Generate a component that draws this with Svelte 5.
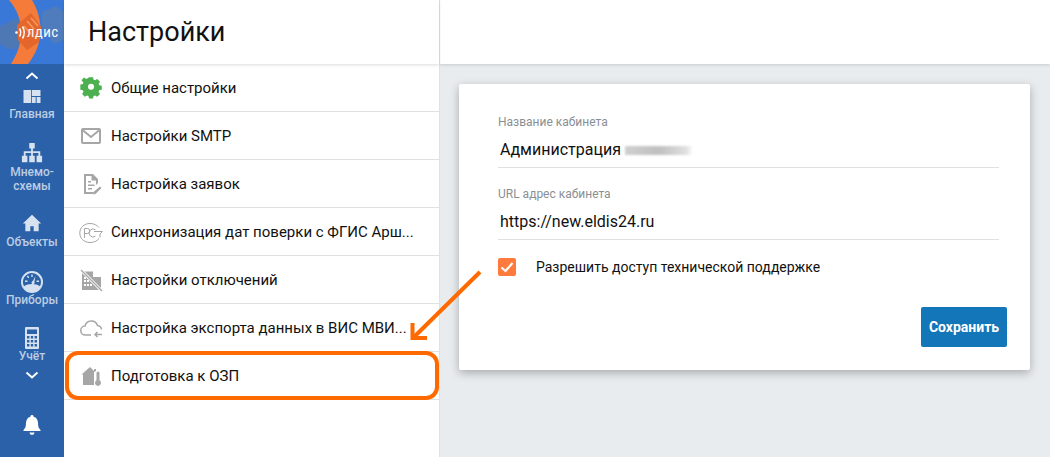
<script>
  const nav = [
    { id: 'home', label: ['Главная'], size: 20 },
    { id: 'tree', label: ['Мнемо-', 'схемы'], size: 22 },
    { id: 'house', label: ['Объекты'], size: 20 },
    { id: 'gauge', label: ['Приборы'], size: 24 },
    { id: 'calc', label: ['Учёт'], size: 24 }
  ];
  const items = [
    { id: 'gear', text: 'Общие настройки' },
    { id: 'mail', text: 'Настройки SMTP' },
    { id: 'doc', text: 'Настройка заявок' },
    { id: 'pct', text: 'Синхронизация дат поверки с ФГИС Арш...' },
    { id: 'off', text: 'Настройки отключений' },
    { id: 'cloud', text: 'Настройка экспорта данных в ВИС МВИ...' },
    { id: 'ozp', text: 'Подготовка к ОЗП' }
  ];
</script>

<div class="app">
  <aside class="rail">
    <div class="logo">
      <svg viewBox="0 0 64 64" width="64" height="64">
        <rect width="64" height="64" fill="#3a78d8" />
        <path d="M0 26 18 18 26 30 26 44 10 50 0 44Z" fill="#4d78b4" />
        <path d="M42 12 56 6 64 12V40L54 44 42 28Z" fill="#4f7cbc" />
        <path d="M9 0H32C44 20 44 44 28 64H11C24 44 26 20 9 0Z" fill="#f47b3a" />
        <path d="M17 25 31 13 41 27 39 42 27 50 18 40Z" fill="#e5662a" />
        <path d="M27 21l7 8M31 18l7 8M24 26l7 8" stroke="#f59a62" stroke-width="1.500" />
        <circle cx="16.500" cy="32.500" r="1.300" fill="#fff" />
        <path d="M19.500 28.500q2.500 4 0 8M22.500 26.500q3.500 6 0 12" fill="none" stroke="#fff" stroke-width="1.500" />
        <text x="27" y="37" class="logo-t" textLength="31" lengthAdjust="spacing">ЛДИС</text>
      </svg>
    </div>
    <svg class="chev" viewBox="0 0 14 8" width="14" height="8"><path d="M1.500 6.500 7 1.500l5.500 5" /></svg>
    {#each nav as n}
      <div class="nav-item {n.id}">
        <svg viewBox="0 0 24 24" width={n.size} height={n.size} class="nav-ic">
          {#if n.id === 'home'}
            <path d="M1.800 4.800h9v15.600h-9zM11.800 4.800h10.400v7.200H11.800zM11.800 13.200h4.600v7.200h-4.600zM17.600 13.200h4.600v7.200h-4.600z" />
          {:else if n.id === 'tree'}
            <path d="M9 1h6v6h-2v3h8v5h2v7h-6v-7h2v-3h-6v3h2v7H9v-7h2v-3H5v3h2v7H1v-7h2v-5h8V7H9z" />
          {:else if n.id === 'house'}
            <path d="M12 2 1 12.500h3V22h6v-6h4v6h6v-9.500h3z" />
          {:else if n.id === 'gauge'}
            <path fill-rule="evenodd" d="M12 1a11 11 0 1 0 0 22 11 11 0 0 0 0-22Zm0 2a9 9 0 0 1 9 9c0 1.500-.4 3-1 4.300-2-1.500-5-2.300-8-2.300s-6 .8-8 2.300A9 9 0 0 1 12 3Zm3.500 3-2.600 5.100a1.500 1.500 0 1 0 1.500.8ZM5 10.500h2.500V12H5Zm11.500 0H19V12h-2.500ZM8 5.500 9.300 7.400l-1.200.8L6.800 6.300ZM11.300 4.500h1.400V7h-1.400Z" />
          {:else}
            <path fill-rule="evenodd" d="M6 1h12a1 1 0 0 1 1 1v20a1 1 0 0 1-1 1H6a1 1 0 0 1-1-1V2a1 1 0 0 1 1-1Zm1 2.500v4.500h10V3.500ZM7 10v2.500h2.400V10Zm3.800 0v2.500h2.400V10Zm3.800 0v2.500H17V10ZM7 14v2.500h2.400V14Zm3.800 0v2.500h2.400V14Zm3.800 0v2.500H17V14ZM7 18v2.500h2.400V18Zm3.800 0v2.500h2.400V18Zm3.800 0v2.500H17V18Z" />
          {/if}
        </svg>
        <div class="nav-label">
          {#each n.label as l}<div>{l}</div>{/each}
        </div>
      </div>
    {/each}
    <svg class="chev down" viewBox="0 0 14 8" width="14" height="8"><path d="M1.500 1.500 7 6.500l5.500-5" /></svg>
    <svg class="bell" viewBox="0 0 18 20" width="18" height="20">
      <path d="M9 0a1.500 1.500 0 0 1 1.500 1.700C13.500 2.400 15 5 15 8c0 4 1 5.500 2.500 7v1H.5v-1C2 13.500 3 12 3 8c0-3 1.500-5.600 4.500-6.300A1.500 1.500 0 0 1 9 0ZM6.500 17.500h5a2.500 2.500 0 0 1-5 0Z" />
    </svg>
  </aside>

  <section class="list">
    <header class="list-head"><h1>Настройки</h1></header>
    <ul>
      {#each items as it}
        <li>
          <svg class="ic" viewBox="0 0 24 24" width="24" height="24">
            {#if it.id === 'gear'}
              <g fill="#4caf50">
                <path fill-rule="evenodd" d="M9.700 2h4.600l.6 2.900 1.700.7 2.500-1.600 3.200 3.200-1.600 2.500.7 1.700 2.900.6v4.600l-2.900.6-.7 1.700 1.600 2.500-3.200 3.200-2.500-1.600-1.700.7-.6 2.900H9.700l-.6-2.900-1.700-.7-2.500 1.600-3.200-3.200 1.600-2.500-.7-1.700-2.900-.6V10.400l2.900-.6.7-1.700L.9 5.600 4 2.400 6.500 4l1.700-.7ZM12 9.500a3.500 3.500 0 1 0 0 7 3.500 3.500 0 0 0 0-7Z" transform="translate(1.600 -.6) scale(.87)" />
              </g>
            {:else if it.id === 'mail'}
              <g fill="none" stroke="#a6a6a6" stroke-width="2"><rect x="3" y="5" width="18" height="14" rx="1" /><path d="m3.500 6 8.500 7 8.500-7" /></g>
            {:else if it.id === 'doc'}
              <path fill="#a6a6a6" fill-rule="evenodd" d="M5 2h9l5 5v4l-2 2V8.500h-4.500V4H7v16h7.500v2H5ZM9 9h3v1.500H9Zm0 3.500h6.500V14H9ZM9 16h4v1.500H9Zm12 -1.500 1.500 1.500-6 6-2.500.5.500-2.500Z" />
            {:else if it.id === 'pct'}
              <g fill="none" stroke="#a6a6a6" stroke-width="1" transform="translate(0 1)">
                <path d="M20 6.500C18 4 15 2.500 11 2.500 5 2.500.8 6.500.8 12S5 21.500 11 21.500c4 0 7-1.500 9-4" />
                <path d="M5.500 17V7.500h2.800a2.500 2.500 0 0 1 0 5H5.500" />
                <path d="M16.500 8.800a4 4 0 1 0 0 6.400" />
                <path d="M15 10.500h8.500l-2.500 2.500v3.500" />
              </g>
            {:else if it.id === 'off'}
              <path fill="#a6a6a6" fill-rule="evenodd" d="M3 3h2l.5.5h8.500v5.500h8v13H3Zm2 6v2h2V9Zm3 0v2h2V9Zm-3 3v2h2v-2Zm3 0v2h2v-2Zm-3 4v2h2v-2Zm3 0v2h2v-2Zm3 0v2h2v-2Z" />
              <path d="M2 2 23 23" stroke="#fff" stroke-width="3" />
              <path d="M2 2 23 23" stroke="#a6a6a6" stroke-width="1.300" />
            {:else if it.id === 'cloud'}
              <g fill="none" stroke="#a6a6a6" stroke-width="1.500">
                <path d="M12 19H6.500a4.500 4.500 0 0 1-.5-9A6.500 6.500 0 0 1 18.500 9.500a4.500 4.500 0 0 1 4 4" />
                <path d="M23 18.500h-7m2.500-2.500L16 18.500l2.500 2.500" />
              </g>
            {:else}
              <path fill="#a6a6a6" d="M11 3 2.500 10.500h1.500V21h11V7.500L17 9V5h-2v2Z" />
              <rect x="16" y="6" width="6" height="16" rx="3" fill="#fff" />
              <path fill="#a6a6a6" d="M17.500 9a1.500 1.500 0 0 1 3 0v7.300a3 3 0 1 1-3 0Z" />
            {/if}
          </svg>
          <span class="txt">{it.text}</span>
        </li>
      {/each}
    </ul>
    <div class="highlight"></div>
  </section>

  <main class="right">
    <div class="top"></div>
    <div class="content">
      <form class="card">
        <label class="field">
          <span class="cap">Название кабинета</span>
          <span class="val">Администрация <i class="blur"></i></span>
        </label>
        <label class="field second">
          <span class="cap">URL адрес кабинета</span>
          <span class="val">https://new.eldis24.ru</span>
        </label>
        <div class="check">
          <span class="box">
            <svg viewBox="0 0 18 18" width="18" height="18"><path d="M3.500 9.500 7.500 13 14.500 5" fill="none" stroke="#fff" stroke-width="2" /></svg>
          </span>
          <span class="check-l">Разрешить доступ технической поддержке</span>
        </div>
        <div class="actions"><button type="button">Сохранить</button></div>
      </form>
    </div>
  </main>

  <svg class="arrow" viewBox="405 265 80 80" width="80" height="80">
    <path d="M480 272 414 337" fill="none" stroke="#ff6a00" stroke-width="4" />
    <path d="M412.500 323V338H427" fill="none" stroke="#ff6a00" stroke-width="4" />
  </svg>
</div>

<style>
  :global(body) { margin: 0; }
  .app {
    position: relative;
    display: flex;
    width: 1050px;
    height: 457px;
    overflow: hidden;
    font-family: Roboto, "Liberation Sans", sans-serif;
    color: #111;
    background: #e9ecef;
  }
  .rail {
    width: 64px;
    flex: none;
    background: #2a61a8;
    display: flex;
    flex-direction: column;
    align-items: center;
    color: #bccde4;
    font-size: 12px;
    font-weight: 500;
  }
  .logo { height: 64px; width: 64px; overflow: hidden; flex: none; }
  .logo svg { display: block; }
  .logo-t { font: 500 10px Roboto, sans-serif; fill: #fff; }
  .chev { margin-top: 8px; flex: none; }
  .chev path { fill: none; stroke: #fff; stroke-width: 2; }
  .chev.down { margin-top: 0; }
  .nav-item { display: flex; flex-direction: column; align-items: center; text-align: center; line-height: 14px; flex: none; }
  .nav-ic { fill: #d6e2f0; display: block; flex: none; }
  .nav-item.home { margin-top: 6px; height: 56px; }
  .nav-item.home .nav-label { margin-top: 1px; }
  .nav-item.tree { height: 71px; }
  .nav-item.tree .nav-label { margin-top: 1px; }
  .nav-item.house { height: 57px; }
  .nav-item.house .nav-label { margin-top: 2px; }
  .nav-item.gauge { height: 56px; }
  .nav-item.gauge .nav-label { margin-top: -1px; }
  .nav-item.calc { height: 45px; }
  .nav-item.calc .nav-label { margin-top: -1px; }
  .bell { margin-top: 36px; fill: #fff; flex: none; }
  .list {
    position: relative;
    width: 375px;
    flex: none;
    background: #fff;
    border-right: 1px solid #dfe1e3;
  }
  .list-head {
    height: 64px;
    display: flex;
    align-items: center;
    padding-left: 24px;
    box-shadow: 0 1px 3px rgba(0, 0, 0, .14);
    position: relative;
  }
  h1 { margin: 0; font-size: 27px; font-weight: 400; color: #111; }
  ul { list-style: none; margin: 0; padding: 0; }
  li {
    height: 47px;
    display: flex;
    align-items: center;
    padding-left: 15px;
    border-bottom: 1px solid #e0e0e0;
    font-size: 15px;
  }
  .ic { flex: none; }
  .txt { margin-left: 8px; white-space: nowrap; }
  .highlight {
    position: absolute;
    left: 1px;
    top: 351px;
    width: 374px;
    height: 49px;
    box-sizing: border-box;
    border: 4px solid #ff6a00;
    border-radius: 13px;
  }
  .right { flex: 1; display: flex; flex-direction: column; min-width: 0; }
  .top { height: 64px; background: #fff; box-shadow: 0 1px 3px rgba(0, 0, 0, .14); }
  .content { padding: 20px 20px 0 19px; }
  .card {
    height: 286px;
    background: #fff;
    border-radius: 2px;
    box-shadow: 0 3px 10px rgba(0, 0, 0, .28);
    padding: 30px 31px 0 39px;
    box-sizing: border-box;
    display: flex;
    flex-direction: column;
  }
  .field { display: flex; flex-direction: column; border-bottom: 1px solid #e0e0e0; height: 53px; }
  .field.second { margin-top: 18px; height: 53px; }
  .cap { font-size: 12px; line-height: 16px; color: #8a8f94; }
  .val { font-size: 16px; line-height: 22px; margin-top: 9px; padding-left: 2px; color: #111; }
  .blur {
    display: inline-block;
    width: 68px;
    height: 9px;
    vertical-align: 0;
    background: linear-gradient(90deg, #d0d0d0, #c0c0c0 50%, #e0e0e0 90%, #fff);
    filter: blur(1px);
  }
  .check { display: flex; align-items: center; margin-top: 17px; height: 20px; }
  .box {
    width: 18px;
    height: 18px;
    background: #ff7a3d;
    border-radius: 2px;
    display: block;
    line-height: 0;
  }
  .check-l { margin-left: 20px; font-size: 14px; }
  .actions { display: flex; justify-content: flex-end; margin: 30px -8px 0 0; }
  button {
    width: 86px;
    height: 40px;
    background: #1276b8;
    color: #fff;
    border: 0;
    border-radius: 2px;
    font: 700 14px Roboto, "Liberation Sans", sans-serif;
    padding: 0;
  }
  .arrow {
    position: absolute;
    left: 405px;
    top: 265px;
  }
</style>
